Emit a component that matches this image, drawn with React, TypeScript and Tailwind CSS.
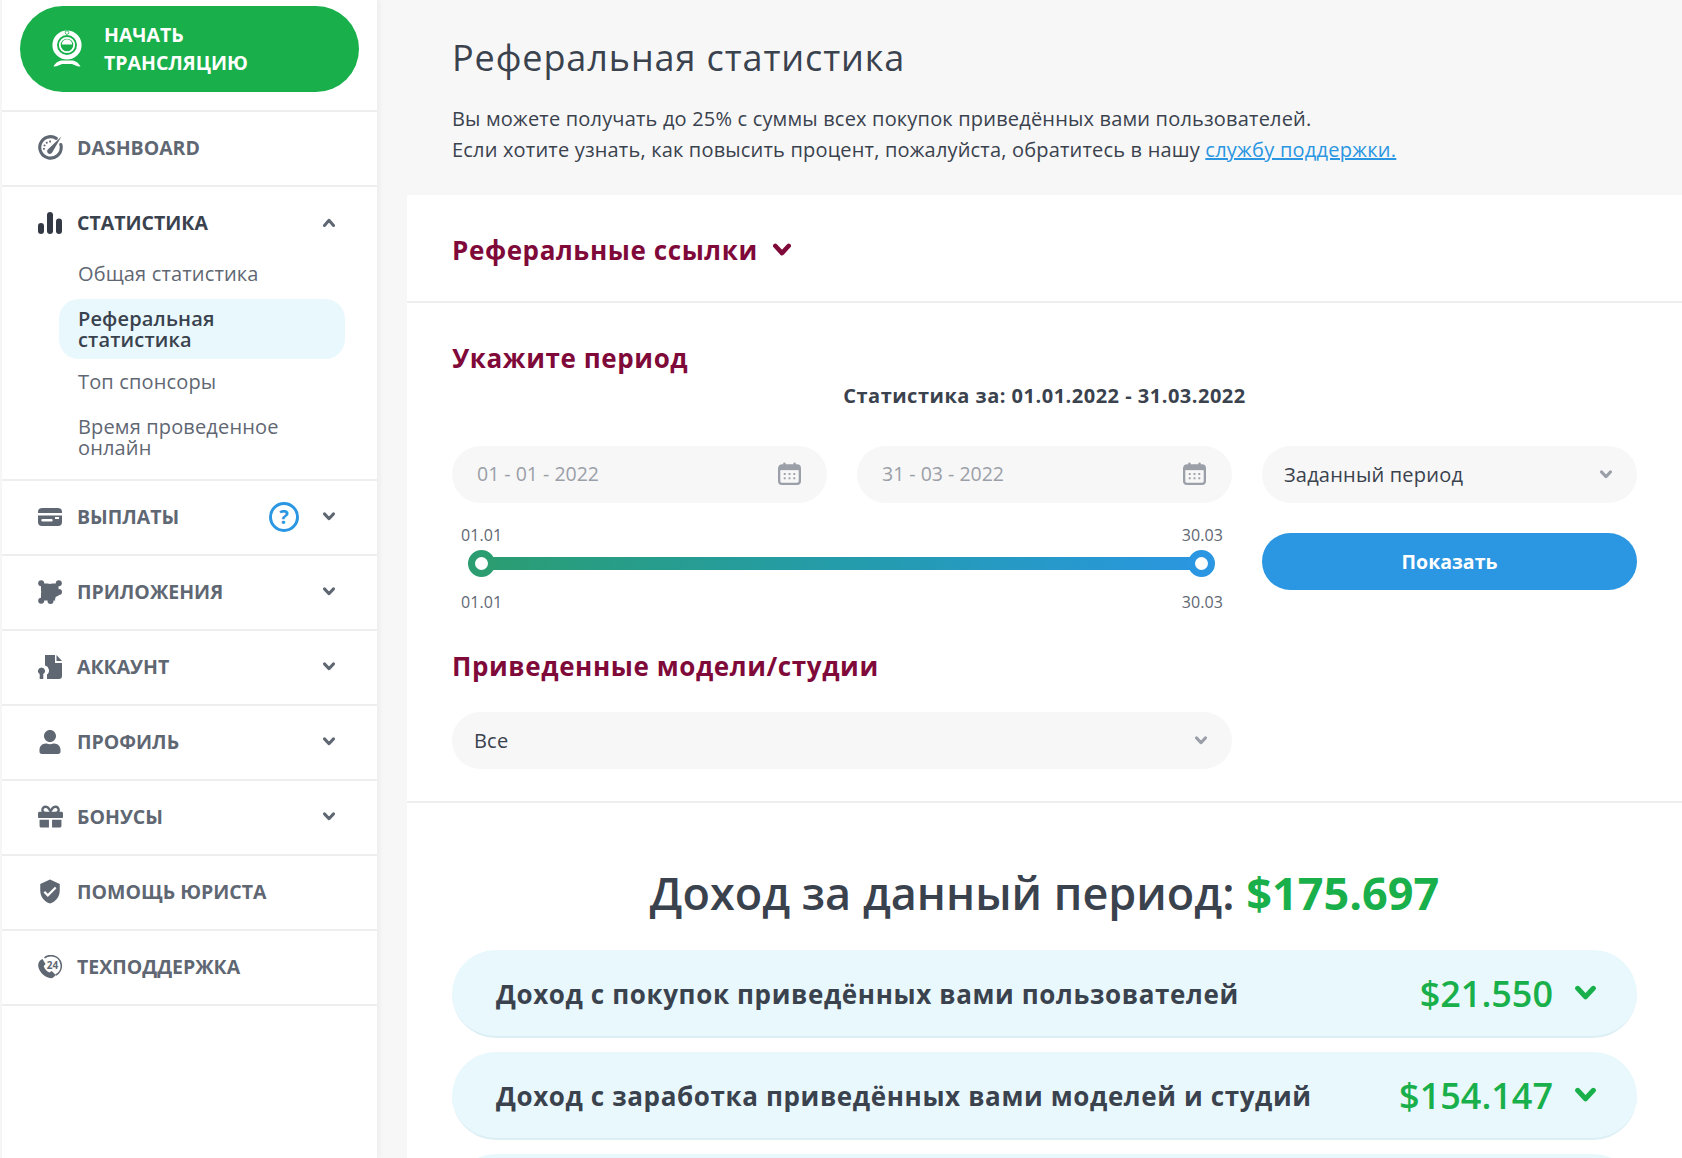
import React from "react";
import { FaUser, FaGift } from "react-icons/fa";
import { MdVerifiedUser } from "react-icons/md";

const Chevron = ({ up, className, w = 12, sw = 3 }: { up?: boolean; className?: string; w?: number; sw?: number }) => (
  <svg width={w} height={w * 0.75} viewBox="0 0 16 12" className={className} fill="none" stroke="currentColor" strokeWidth={sw * (16 / w)} strokeLinecap="round" strokeLinejoin="round">
    <polyline points={up ? "2,10 8,3 14,10" : "2,2.5 8,9 14,2.5"} />
  </svg>
);

const Gauge = () => (
  <svg width="25" height="25" viewBox="0 0 24 24" fill="none">
    <path d="M17.500 3.200A10.300 10.300 0 1 0 22.300 12c0-1-.1-1.900-.4-2.800" stroke="#5f6773" strokeWidth="3" strokeLinecap="round" />
    <path d="M11 18.200a2.600 2.600 0 0 1-1.300-4.600L22.500 1.500 13.600 16.800a2.600 2.600 0 0 1-2.600 1.400z" fill="#5f6773" />
    <path d="M5.800 14a6.500 6.500 0 0 1 8.200-7.500" stroke="#5f6773" strokeWidth="1.800" strokeDasharray="1.600 1.700" />
  </svg>
);
const Bars = () => (
  <svg width="24" height="22" viewBox="0 0 24 22" fill="#343a45">
    <rect x="0" y="11" width="6" height="11" rx="3" />
    <rect x="9" y="0" width="6" height="22" rx="3" />
    <rect x="18" y="6.500" width="6" height="15.500" rx="3" />
  </svg>
);
const Card = () => (
  <svg width="24" height="18" viewBox="0 0 24 18" fill="#5f6773">
    <path d="M4 0h16a4 4 0 0 1 4 4v1H0V4a4 4 0 0 1 4-4z" />
    <path d="M0 7.500h24V14a4 4 0 0 1-4 4H4a4 4 0 0 1-4-4z M4.500 11a1 1 0 0 0 0 2.400h9a1 1 0 0 0 0-2.400z M17 9v2h4V9z" fillRule="evenodd" />
  </svg>
);
const Puzzle = () => (
  <svg width="24" height="24" viewBox="0 0 24 24" fill="#5f6773">
    <rect x="3" y="3.500" width="17.500" height="17" rx="1" />
    <circle cx="3.200" cy="3.200" r="3" />
    <circle cx="20.800" cy="3.200" r="3" />
    <circle cx="3.200" cy="20.800" r="3" />
    <circle cx="12.500" cy="20.900" r="3" />
    <circle cx="21" cy="12" r="3" />
    <circle cx="12" cy="0.500" r="3.200" fill="#ffffff" />
    <circle cx="0" cy="12" r="3.200" fill="#ffffff" />
    <circle cx="20.500" cy="19.500" r="3.400" fill="#ffffff" />
  </svg>
);
const FileKey = () => (
  <svg width="24" height="24" viewBox="0 0 24 24" fill="#5f6773">
    <path d="M7 0h10v8h7v13a3 3 0 0 1-3 3H9v-4.500a5 5 0 0 0-2-8.900z" />
    <path d="M18.500 0L24 6h-5.500z" />
    <path d="M3.500 12.500a3.500 3.500 0 0 1 1.800 6.500V24H1.700v-5A3.500 3.500 0 0 1 3.500 12.500z" />
  </svg>
);
const Phone24 = () => (
  <svg width="24" height="24" viewBox="0 0 24 24" fill="none">
    <path d="M6.500 2.800A10 10 0 0 1 14 0.700a10.300 10.300 0 0 1 3.500 19.500" stroke="#5f6773" strokeWidth="1.600" />
    <path d="M4.500 4l3 5-1.800 2.200c1 2.800 3 5 5.800 6.300l2.200-1.500 3.800 3.800c-1.200 2.800-3.500 3.800-6 3.200C5.500 21.500 1 16.500 0.200 11 0 7.500 1.800 4.800 4.500 4z" fill="#5f6773" />
    <text x="14.500" y="14" fontSize="10" fontWeight="700" textAnchor="middle" fill="#5f6773" fontFamily="Open Sans">24</text>
  </svg>
);
const Webcam = () => (
  <svg width="30" height="38" viewBox="0 0 30 38" fill="none">
    <circle cx="15" cy="15" r="12.300" stroke="#ffffff" strokeWidth="4.600" />
    <circle cx="15" cy="2.600" r="1.800" fill="#ffffff" stroke="#19b04b" strokeWidth="0.800" />
    <circle cx="15" cy="15" r="7.200" stroke="#ffffff" strokeWidth="1.800" />
    <path d="M9.800 14.500a5.200 5.200 0 0 1 10.400 0z" fill="#ffffff" />
    <path d="M1.500 36.500c2-4.500 7-6 8.500-6h10c1.500 0 6.500 1.500 8.500 6-3 .5-6-1.500-8.500-2.500h-10c-2.500 1-5.500 3-8.500 2.500z" fill="#ffffff" />
  </svg>
);
const Calendar = () => (
  <svg width="23" height="23" viewBox="0 0 24 24" fill="none">
    <rect x="1.200" y="3.500" width="21.600" height="19.300" rx="3" stroke="#9b9fa8" strokeWidth="2.400" />
    <rect x="1.200" y="3.500" width="21.600" height="5" fill="#9b9fa8" />
    <rect x="5.500" y="0.500" width="2.400" height="5" rx="1" fill="#9b9fa8" />
    <rect x="16.100" y="0.500" width="2.400" height="5" rx="1" fill="#9b9fa8" />
    <g fill="#9b9fa8">
      <rect x="6" y="11.500" width="2" height="2" /><rect x="11" y="11.500" width="2" height="2" /><rect x="16" y="11.500" width="2" height="2" />
      <rect x="6" y="16" width="2" height="2" /><rect x="11" y="16" width="2" height="2" /><rect x="16" y="16" width="2" height="2" />
    </g>
  </svg>
);

const rows: { label: string; icon: React.ReactNode; chevron?: boolean; help?: boolean }[] = [
  { label: "ВЫПЛАТЫ", icon: <Card />, chevron: true, help: true },
  { label: "ПРИЛОЖЕНИЯ", icon: <Puzzle />, chevron: true },
  { label: "АККАУНТ", icon: <FileKey />, chevron: true },
  { label: "ПРОФИЛЬ", icon: <FaUser size={24} />, chevron: true },
  { label: "БОНУСЫ", icon: <FaGift size={25} />, chevron: true },
  { label: "ПОМОЩЬ ЮРИСТА", icon: <MdVerifiedUser size={29} /> },
  { label: "ТЕХПОДДЕРЖКА", icon: <Phone24 /> },
];

const NavRow = ({ label, icon, chevron, help }: { label: string; icon: React.ReactNode; chevron?: boolean; help?: boolean }) => (
  <div className="flex h-[75px] items-center border-b-2 border-[#eeeeee] pb-[2px] pl-[35px] pr-[42px] text-[#5f6773]">
    <span className="flex w-[26px] shrink-0 items-center justify-center">{icon}</span>
    <span className="ml-[14px] flex-1 text-[19.5px] font-bold leading-none">{label}</span>
    {help && (
      <span className="mr-[24px] flex h-[30px] w-[30px] items-center justify-center rounded-full border-[3px] border-[#2b96e1] text-[20px] font-bold leading-none text-[#2b96e1]">?</span>
    )}
    {chevron && <Chevron />}
  </div>
);

const SubItem = ({ children, active, className = "" }: { children: React.ReactNode; active?: boolean; className?: string }) => (
  <div className={"rounded-[20px] py-[9px] pl-[19px] pr-4 text-[20px] leading-[21px] tracking-[0.15px] " + (active ? "bg-[#e9f8fc] font-semibold text-[#3a424e] " : "text-[#5f6773] ") + className}>{children}</div>
);

const Field = ({ children }: { children: React.ReactNode }) => (
  <div className="flex h-[57px] items-center justify-between rounded-full bg-[#f7f7f7] pb-[2px] pl-[25px] pr-[26px] text-[19.5px] text-[#9b9fa8]">{children}</div>
);

const Select = ({ label }: { label: string }) => (
  <div className="flex h-[57px] items-center justify-between rounded-full bg-[#f7f7f7] pl-[22px] pr-[25px] text-[20px] tracking-[0.2px] text-[#3a424e]">
    <span>{label}</span>
    <Chevron className="text-[#9b9fa8]" />
  </div>
);

const IncomeRow = ({ label, amount }: { label: string; amount: string }) => (
  <div className="flex h-[88px] shrink-0 items-center rounded-[44px] border-b-2 border-[#dceff5] bg-[#e9f8fc] pl-[44px] pr-[41px]">
    <span className="mt-[2px] flex-1 text-[26px] font-bold tracking-[0.62px] text-[#3a424e]">{label}</span>
    <span className="mt-[2px] text-[36px] font-semibold leading-none text-[#19b04b]">{amount}</span>
    {amount && <Chevron className="ml-[22px] text-[#19b04b]" w={21} sw={5} />}
  </div>
);

export default function App() {
  return (
    <div className="flex h-[1158px] overflow-hidden bg-[#f7f7f7] font-['Open_Sans',sans-serif]">
      <aside className="ml-[2px] h-full w-[375px] shrink-0 bg-white shadow-[2px_0_6px_rgba(0,0,0,0.05)]">
        <div className="h-[112px] border-b-2 border-[#eeeeee] pl-[18px] pt-[6px]">
          <div className="flex h-[86px] w-[339px] items-center rounded-full bg-[#19b04b] pl-[32px] text-white">
            <Webcam />
            <span className="ml-[22px] text-[19.5px] font-bold leading-[28px]">НАЧАТЬ<br />ТРАНСЛЯЦИЮ</span>
          </div>
        </div>
        <NavRow label="DASHBOARD" icon={<Gauge />} />
        <div className="border-b-2 border-[#eeeeee] pb-[12px]">
          <div className="flex h-[75px] items-center pb-[3px] pl-[35px] pr-[42px] text-[#3a424e]">
            <span className="flex w-[26px] shrink-0 justify-center"><Bars /></span>
            <span className="ml-[14px] flex-1 text-[19.5px] font-bold leading-none">СТАТИСТИКА</span>
            <Chevron up className="mb-[2px] text-[#5f6773]" />
          </div>
          <div className="-mt-[8px] flex flex-col pl-[57px] pr-[32px]">
            <SubItem>Общая статистика</SubItem>
            <SubItem active className="mt-[6px]">Реферальная статистика</SubItem>
            <SubItem className="mt-[3px]">Топ спонсоры</SubItem>
            <SubItem className="mt-[6px]">Время проведенное онлайн</SubItem>
          </div>
        </div>
        {rows.map((r) => (
          <NavRow key={r.label} {...r} />
        ))}
      </aside>
      <main className="ml-[30px] flex h-full flex-1 flex-col overflow-hidden">
        <header className="h-[195px] shrink-0 px-[45px] pt-[33px]">
          <h1 className="text-[36px] font-medium leading-[50px] tracking-[0.9px] text-[#3a424e]">Реферальная статистика</h1>
          <p className="mt-[20px] text-[20px] leading-[31px] tracking-[0.18px] text-[#3a424e]">
            Вы можете получать до 25% с суммы всех покупок приведённых вами пользователей.<br />
            Если хотите узнать, как повысить процент, пожалуйста, обратитесь в нашу <span className="tracking-[0.25px] text-[#2b96e1] underline">службу поддержки.</span>
          </p>
        </header>
        <div className="flex-1 bg-white">
          <div className="flex h-[108px] items-center gap-[15px] border-b-2 border-[#eeeeee] px-[45px] pt-[4px]">
            <h2 className="text-[26px] font-bold tracking-[0.6px] text-[#7f0a3a]">Реферальные ссылки</h2>
            <Chevron className="text-[#7f0a3a]" w={18} sw={4.5} />
          </div>
          <div className="h-[500px] border-b-2 border-[#eeeeee] px-[45px] pt-[37px]">
            <h2 className="text-[26px] font-bold leading-[36px] tracking-[0.6px] text-[#7f0a3a]">Укажите период</h2>
            <div className="mt-[6px] text-center text-[20px] font-bold leading-[28px] tracking-[0.5px] text-[#3a424e]">Статистика за: 01.01.2022 - 31.03.2022</div>
            <div className="mt-[36px] grid grid-cols-3 gap-x-[30px]">
              <div className="col-span-2">
                <div className="grid grid-cols-2 gap-x-[30px]">
                  <Field><span>01 - 01 - 2022</span><Calendar /></Field>
                  <Field><span>31 - 03 - 2022</span><Calendar /></Field>
                </div>
                <div className="mt-[21px] flex justify-between pl-[9px] pr-[9px] text-[16px] leading-[22px] tracking-[0.1px] text-[#5f6773]"><span>01.01</span><span>30.03</span></div>
                <div className="relative ml-[16px] mr-[17px] mt-[4px] h-[27px]">
                  <div className="absolute inset-x-[10px] top-[7px] h-[13px] bg-gradient-to-r from-[#2b9d70] to-[#2b96e1]" />
                  <div className="absolute left-0 top-0 h-[27px] w-[27px] rounded-full border-[7.5px] border-[#2b9d70] bg-white" />
                  <div className="absolute right-0 top-0 h-[27px] w-[27px] rounded-full border-[7.5px] border-[#2b96e1] bg-white" />
                </div>
                <div className="mt-[14px] flex justify-between pl-[9px] pr-[9px] text-[16px] leading-[22px] tracking-[0.1px] text-[#5f6773]"><span>01.01</span><span>30.03</span></div>
              </div>
              <div>
                <Select label="Заданный период" />
                <div className="mt-[30px] flex h-[57px] items-center justify-center rounded-full bg-[#2b96e1] text-[19.5px] font-bold text-white">Показать</div>
              </div>
            </div>
            <h2 className="mt-[35px] text-[26px] font-bold leading-[36px] tracking-[0.6px] text-[#7f0a3a]">Приведенные модели/студии</h2>
            <div className="mt-[28px] w-[780px]"><Select label="Все" /></div>
          </div>
          <div className="flex flex-col gap-[14px] px-[45px] pt-[58px]">
            <div className="mb-[11px] text-center text-[45px] font-semibold leading-[64px] text-[#3a424e]">Доход за данный период: <span className="font-bold text-[#19b04b]">$175.697</span></div>
            <IncomeRow label="Доход с покупок приведённых вами пользователей" amount="$21.550" />
            <IncomeRow label="Доход с заработка приведённых вами моделей и студий" amount="$154.147" />
            <IncomeRow label="" amount="" />
          </div>
        </div>
      </main>
    </div>
  );
}
